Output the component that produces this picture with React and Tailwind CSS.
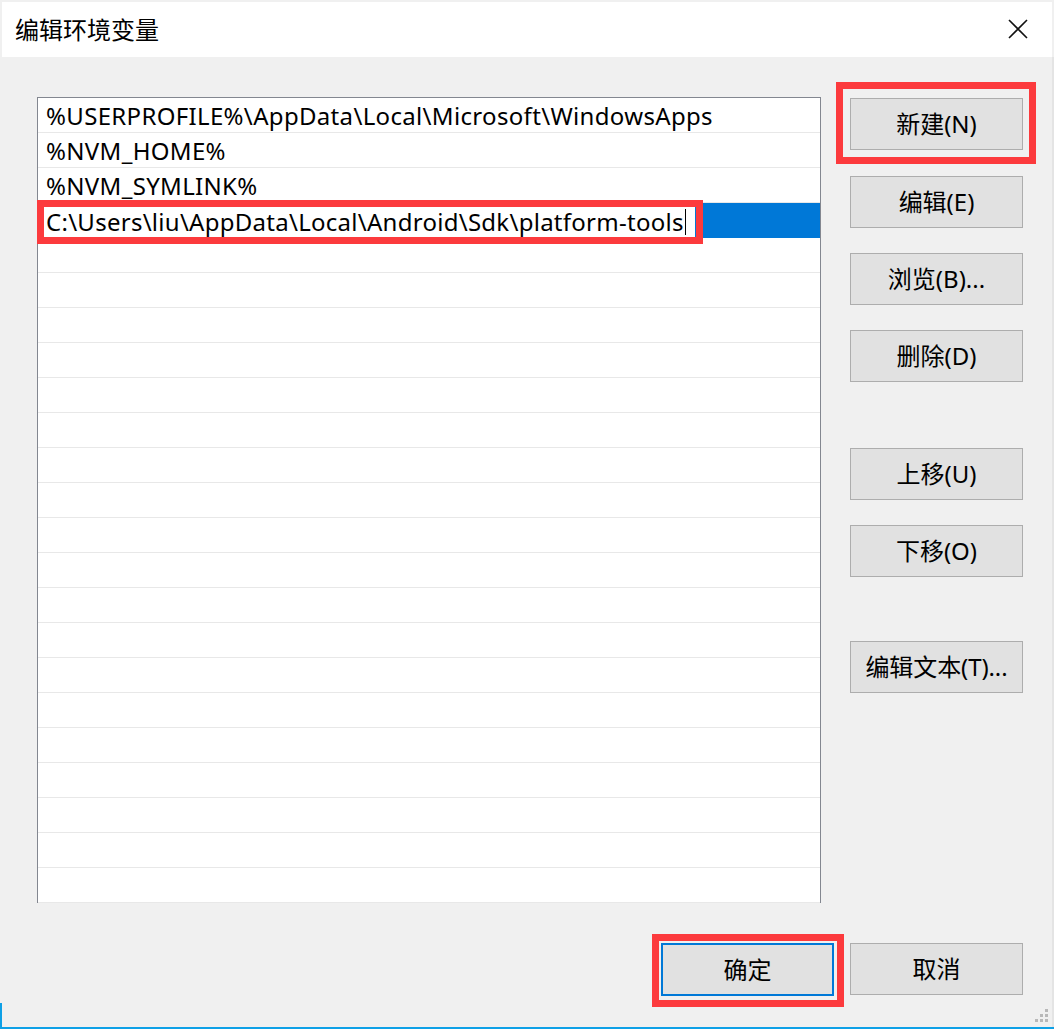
const FONT = { fontFamily: '"Noto Sans", "Noto Sans CJK SC", sans-serif' };

const rows = [
  "%USERPROFILE%\\AppData\\Local\\Microsoft\\WindowsApps",
  "%NVM_HOME%",
  "%NVM_SYMLINK%",
];

function Btn({ label, className = "" }) {
  return (
    <div
      className={
        "flex h-[52px] w-[173px] items-center justify-center border border-[#adadad] bg-[#e1e1e1] text-[24px] text-black " +
        className
      }
    >
      {label}
    </div>
  );
}

function RedBox({ className }) {
  return <div className={"pointer-events-none absolute border-[7px] border-[#fc3a3d] " + className} />;
}

export default function App() {
  const emptyRows = Array.from({ length: 19 });

  return (
    <div className="relative flex h-[1029px] w-[1054px] flex-col overflow-hidden bg-[#f0f0f0]" style={FONT}>
      {/* title bar */}
      <div className="ml-[2px] mr-[2px] mt-[2px] flex h-[55px] items-center justify-between bg-white pl-[13px] pr-[24px]">
        <span className="text-[24px] text-black">编辑环境变量</span>
        <svg width="20" height="20" viewBox="0 0 20 20" className="mt-[-2px]">
          <path d="M1 1 L19 19 M19 1 L1 19" stroke="#111" strokeWidth="1.6" />
        </svg>
      </div>

      <div className="flex flex-1 flex-col">
        <div className="flex pl-[37px] pt-[40px]">
          {/* list */}
          <div className="flex h-[806px] w-[784px] flex-col border border-[#838790] bg-white">
            {rows.map((r) => (
              <div key={r} className="flex h-[35px] shrink-0 items-center border-b border-[#e8e8e8] pl-[8px] pt-[2px] text-[24px] tracking-[0.33px] text-black">
                {r}
              </div>
            ))}
            <div className="relative flex h-[35px] shrink-0 items-center bg-[#0078d7]">
              <div className="ml-[6px] flex h-[32px] w-[651px] items-center bg-white pl-[2px] pt-[2px] text-[24px] tracking-[0.27px] text-black">
                C:\Users\liu\AppData\Local\Android\Sdk\platform-tools
                <span className="ml-[1px] inline-block h-[26px] w-[1px] bg-black" />
              </div>
              <RedBox className="left-[-1px] top-[-3px] h-[44px] w-[666px] border-[6px]" />
            </div>
            {emptyRows.map((_, i) => (
              <div key={i} className="h-[35px] shrink-0 border-b border-[#e8e8e8]" />
            ))}
          </div>

          {/* side buttons */}
          <div className="ml-[29px] flex flex-col pt-[1px]">
            <div className="relative">
              <Btn label="新建(N)" />
              <RedBox className="left-[-14px] top-[-16px] h-[82px] w-[200px]" />
            </div>
            <Btn label="编辑(E)" className="mt-[26px]" />
            <Btn label="浏览(B)..." className="mt-[25px]" />
            <Btn label="删除(D)" className="mt-[25px]" />
            <Btn label="上移(U)" className="mt-[66px]" />
            <Btn label="下移(O)" className="mt-[25px]" />
            <Btn label="编辑文本(T)..." className="mt-[64px] tracking-[-0.1px]" />
          </div>
        </div>

        {/* bottom buttons */}
        <div className="mt-[40px] flex justify-end gap-[16px] pr-[31px]">
          <div className="relative">
            <div className="flex h-[53px] w-[173px] items-center justify-center border-2 border-[#0078d7] bg-[#e1e1e1] text-[24px] text-black">
              确定
            </div>
            <RedBox className="left-[-9px] top-[-9px] h-[73px] w-[192px]" />
          </div>
          <Btn label="取消" />
        </div>
      </div>

      {/* resize grip */}
      <div className="absolute bottom-[7px] right-[6px] grid grid-cols-3 gap-[2px]">
        <span className="h-[3px] w-[3px]" />
        <span className="h-[3px] w-[3px]" />
        <span className="h-[3px] w-[3px] bg-[#b8b8b8]" />
        <span className="h-[3px] w-[3px]" />
        <span className="h-[3px] w-[3px] bg-[#b8b8b8]" />
        <span className="h-[3px] w-[3px] bg-[#b8b8b8]" />
        <span className="h-[3px] w-[3px] bg-[#b8b8b8]" />
        <span className="h-[3px] w-[3px] bg-[#b8b8b8]" />
        <span className="h-[3px] w-[3px] bg-[#b8b8b8]" />
      </div>

      {/* window edges */}
      <div className="absolute bottom-0 left-0 h-[2px] w-full bg-[#0ea0e6]" />
      <div className="absolute bottom-0 left-0 h-[26px] w-[2px] bg-[#0ea0e6]" />
      <div className="absolute right-0 top-[57px] h-[970px] w-[2px] bg-[#e4e4e4]" />
    </div>
  );
}
